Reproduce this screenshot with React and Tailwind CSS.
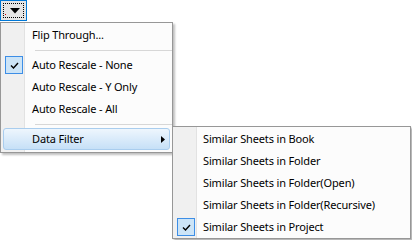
import React from "react";

const Check = () => (
  <div className="absolute w-[18px] h-[18px] border border-[#3d8ee6] bg-[#cce4f7] flex items-center justify-center">
    <svg width="9" height="7" viewBox="0 0 9 7">
      <path d="M1 3.5 L3.5 6 L8 1" fill="none" stroke="#000" strokeWidth="1.4" />
    </svg>
  </div>
);

const Item = ({ children, checked, checkLeft }) => (
  <div className="relative h-[22px] flex items-center">
    {checked && <div className="absolute" style={{ left: checkLeft, top: 2 }}><Check /></div>}
    {children}
  </div>
);

export default function App() {
  const font = { fontFamily: '"Noto Sans", sans-serif' };
  return (
    <div className="relative w-[412px] h-[240px] bg-white text-[11px] tracking-[-0.15px] text-black overflow-hidden" style={font}>
      {/* dropdown button */}
      <div className="w-[27px] h-[21px] border border-[#0078d7] bg-[#e5e5e5] p-[2px]">
        <div className="relative w-full h-full border border-dotted border-black flex items-center justify-center">
          <svg width="10" height="6" viewBox="0 0 10 6" className="ml-[2px]">
            <path d="M0 0 H10 L5 5.5 Z" fill="#000" />
          </svg>
          <div className="absolute left-[1px] bottom-[2px] w-[1px] h-[1px] bg-[#d00000]" />
        </div>
      </div>

      {/* main menu */}
      <div className="absolute left-0 top-[22px] w-[173px] h-[131px] border border-[#979797] bg-[#fcfcfc] shadow-[2px_2px_2px_rgba(0,0,0,0.25)]">
        <div className="absolute left-0 top-0 bottom-0 w-[24px] bg-[#f0f0f0] border-r border-[#e2e2e2]" />
        <div className="relative pt-[1px]">
          <Item><span className="pl-[31px]">Flip Through...</span></Item>
          <div className="h-[8px] flex items-center pl-[34px]"><div className="w-full h-[1px] bg-[#d7d7d7]" /></div>
          <Item checked checkLeft={4}><span className="pl-[31px]">Auto Rescale - None</span></Item>
          <Item><span className="pl-[31px]">Auto Rescale - Y Only</span></Item>
          <Item><span className="pl-[31px]">Auto Rescale - All</span></Item>
          <div className="h-[8px] flex items-center pl-[34px]"><div className="w-full h-[1px] bg-[#d7d7d7]" /></div>
          <div className="relative h-[22px] mx-[2px] rounded-[3px] border border-[#a9cdee] bg-gradient-to-b from-[#eef6fd] to-[#c6e0f7] flex items-center">
            <span className="pl-[28px]">Data Filter</span>
            <svg width="4" height="7" viewBox="0 0 4 7" className="absolute right-[4px] top-[7px]">
              <path d="M0 0 L4 3.5 L0 7 Z" fill="#000" />
            </svg>
          </div>
        </div>
      </div>

      {/* submenu */}
      <div className="absolute left-[172px] top-[126px] w-[239px] h-[113px] border border-[#979797] bg-[#fcfcfc] shadow-[2px_2px_2px_rgba(0,0,0,0.3)]">
        <div className="absolute left-0 top-0 bottom-0 w-[24px] bg-[#f0f0f0] border-r border-[#e2e2e2]" />
        <div className="relative pt-[1px]">
          <Item><span className="pl-[30px]">Similar Sheets in Book</span></Item>
          <Item><span className="pl-[30px]">Similar Sheets in Folder</span></Item>
          <Item><span className="pl-[30px]">Similar Sheets in Folder(Open)</span></Item>
          <Item><span className="pl-[30px]">Similar Sheets in Folder(Recursive)</span></Item>
          <Item checked checkLeft={4}><span className="pl-[30px]">Similar Sheets in Project</span></Item>
        </div>
      </div>
    </div>
  );
}
